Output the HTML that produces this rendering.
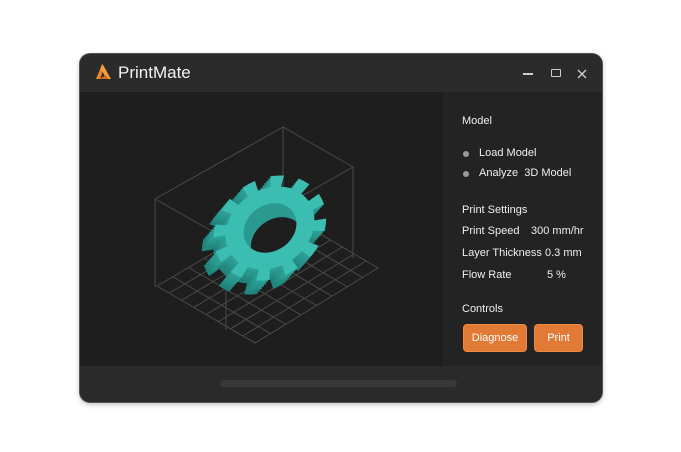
<!DOCTYPE html>
<html><head><meta charset="utf-8"><style>
*{margin:0;padding:0;box-sizing:border-box}
body{width:681px;height:452px;background:#fff;position:relative;font-family:"Liberation Sans",sans-serif;overflow:hidden}
.win{position:absolute;left:80px;top:54px;width:522px;height:348px;border-radius:10px;background:#1e1e1e;overflow:hidden;box-shadow:0 0 0 1px #555,0 2px 6px rgba(0,0,0,.3)}
.title{position:absolute;left:0;top:0;width:100%;height:38px;background:#2b2b2b}
.side{position:absolute;left:363px;top:38px;width:159px;height:274px;background:#232323}
.bottom{position:absolute;left:0;top:312px;width:100%;height:36px;background:#2a2a2a}
.pill{position:absolute;left:140px;top:14px;width:237px;height:7px;border-radius:4px;background:#383838}
.t{position:absolute;color:#eee;font-size:11px;white-space:nowrap}
.dot{position:absolute;width:6px;height:6px;border-radius:50%;background:#999}
.btn{position:absolute;top:232px;height:28px;background:#e07a35;border:1px solid #f08a40;border-radius:4px;color:#fff;font-size:11px;text-align:center;line-height:26px}
</style></head><body>
<div class="win">
 <div class="title">
  <svg style="position:absolute;left:15px;top:9px" width="18" height="18" viewBox="0 0 18 18"><path d="M7 1 L4 9 L1 16 L5 16 L8 8 Z" fill="#e8892e"/><path d="M7.5 1 L16 16 L11 16 L6 5 Z" fill="#f5a040"/><path d="M4 16 L11 12 L13 16 Z" fill="#d06a1c"/></svg>
  <div class="t" style="left:38px;top:9px;font-size:17px;color:#f2f2f2">PrintMate</div>
  <div style="position:absolute;left:443px;top:19px;width:10px;height:1.5px;background:#ccc"></div>
  <div style="position:absolute;left:471px;top:15px;width:10px;height:8px;border:1.5px solid #ccc;border-radius:1px"></div>
  <svg style="position:absolute;left:497px;top:15px" width="10" height="10"><path d="M1 1L9 9M9 1L1 9" stroke="#ccc" stroke-width="1.4"/></svg>
 </div>
 <svg style="position:absolute;left:0;top:0" width="363" height="312" viewBox="80 54 363 312">
  <defs>
   <g id="gear">
    <circle r="47" fill="currentColor"/>
    <circle r="53" fill="none" stroke="currentColor" stroke-width="13" stroke-dasharray="13 14.75"/>
   </g>
   <clipPath id="hc"><circle r="28"/></clipPath>
  </defs>
  <g stroke="#4a4a4a" stroke-width="1" fill="none">
   <path d="M157 286 L283 212 L378 268 L255 343 Z"/>
   <path d="M169.25 293.1L294.9 219M181.5 300.3L306.75 226M193.75 307.4L318.6 233M206 314.5L330.5 240M218.25 321.6L342.4 247M230.5 328.8L354.25 254M242.75 335.9L366.1 261"/>
   <path d="M172.75 276.75L270.4 333.6M188.5 267.5L285.75 324.25M204.25 258.25L301.1 314.9M220 249L316.5 305.5M235.75 239.75L331.9 296.1M251.5 230.5L347.25 286.75M267.25 221.25L362.6 277.4"/>
   <path d="M155 287 L155 199 L283 127 L353 167 L353 258 M283 127 L283 214 M155 199 L226 239 L353 167 M226 239 L226 330"/>
  </g>
  <g transform="translate(-12 14)" style="color:#21847c"><use href="#gear" transform="translate(270 228) rotate(-35) scale(1,.82)"/></g>
  <g transform="translate(-10 11.6)" style="color:#22877f"><use href="#gear" transform="translate(270 228) rotate(-35) scale(1,.82)"/></g>
  <g transform="translate(-8 9.3)" style="color:#258f86"><use href="#gear" transform="translate(270 228) rotate(-35) scale(1,.82)"/></g>
  <g transform="translate(-6 7)" style="color:#27958b"><use href="#gear" transform="translate(270 228) rotate(-35) scale(1,.82)"/></g>
  <g transform="translate(-4 4.7)" style="color:#2a9a90"><use href="#gear" transform="translate(270 228) rotate(-35) scale(1,.82)"/></g>
  <g transform="translate(-2 2.3)" style="color:#2c9f95"><use href="#gear" transform="translate(270 228) rotate(-35) scale(1,.82)"/></g>
  <g style="color:#3bbdb2"><use href="#gear" transform="translate(270 228) rotate(-35) scale(1,.82)"/></g>
  <g transform="translate(270 228) rotate(-35) scale(1,.82)">
   <circle r="28" fill="#2a9a90"/>
   <g clip-path="url(#hc)"><circle r="28" cx="-2" cy="19" fill="#1e1e1e"/></g>
  </g>
 </svg>
 <div class="side">
  <div class="t" style="left:19px;top:23px">Model</div>
  <div class="dot" style="left:20px;top:59px"></div><div class="t" style="left:36px;top:55px">Load Model</div>
  <div class="dot" style="left:20px;top:79px"></div><div class="t" style="left:36px;top:75px">Analyze &nbsp;3D Model</div>
  <div class="t" style="left:19px;top:112px">Print Settings</div>
  <div class="t" style="left:19px;top:133px">Print Speed</div><div class="t" style="left:88px;top:133px">300 mm/hr</div>
  <div class="t" style="left:19px;top:155px">Layer Thickness</div><div class="t" style="left:102px;top:155px">0.3 mm</div>
  <div class="t" style="left:19px;top:177px">Flow Rate</div><div class="t" style="left:104px;top:177px">5 %</div>
  <div class="t" style="left:19px;top:211px">Controls</div>
  <div class="btn" style="left:20px;width:64px">Diagnose</div>
  <div class="btn" style="left:91px;width:49px">Print</div>
 </div>
 <div class="bottom"><div class="pill"></div></div>
</div>
</body></html>
